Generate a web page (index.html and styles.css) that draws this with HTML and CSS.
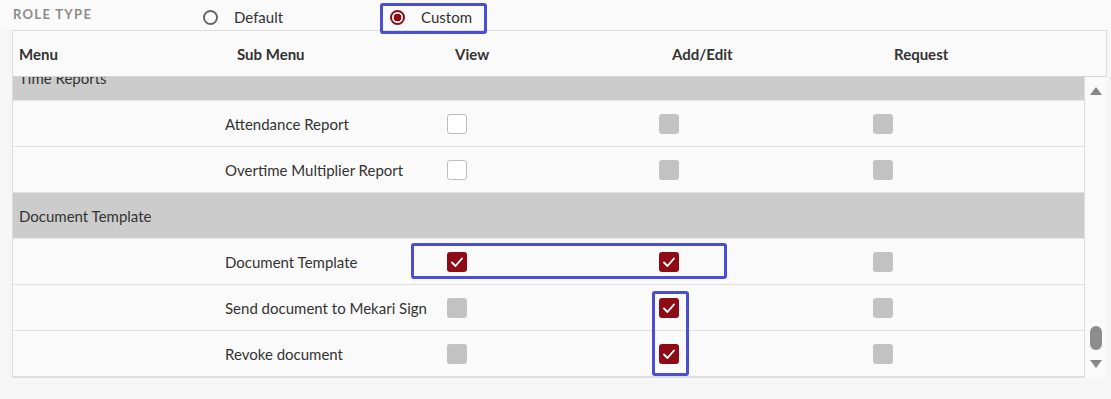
FILE: index.html
```html
<!DOCTYPE html>
<html>

<head>
    <meta charset="UTF-8">
    <title>Role Access</title>
    <link rel="stylesheet" href="styles.css">
</head>

<body>
    <div class="page">
        <div class="role-bar">
            <span class="role-label">ROLE TYPE</span>
            <label class="radio"><span class="dot"></span>Default</label>
            <label class="radio checked"><span class="dot"></span>Custom</label>
        </div>

        <div class="access">
            <div class="thead">
                <div class="cell">Menu</div>
                <div class="cell">Sub Menu</div>
                <div class="cell">View</div>
                <div class="cell">Add/Edit</div>
                <div class="cell">Request</div>
            </div>

            <div class="scroll-wrap">
                <div class="tbody">
                    <div class="rows">
                        <div class="row group"><div class="cell">Time Reports</div></div>

                        <div class="row">
                            <div class="cell"></div>
                            <div class="cell">Attendance Report</div>
                            <div class="cell"><span class="cb"></span></div>
                            <div class="cell"><span class="cb off"></span></div>
                            <div class="cell"><span class="cb off"></span></div>
                        </div>
                        <div class="row">
                            <div class="cell"></div>
                            <div class="cell">Overtime Multiplier Report</div>
                            <div class="cell"><span class="cb"></span></div>
                            <div class="cell"><span class="cb off"></span></div>
                            <div class="cell"><span class="cb off"></span></div>
                        </div>

                        <div class="row group"><div class="cell">Document Template</div></div>

                        <div class="row">
                            <div class="cell"></div>
                            <div class="cell">Document Template</div>
                            <div class="cell"><span class="cb on"><svg viewBox="0 0 20 20"><polyline points="5,10.5 8.5,14 15,6.5"/></svg></span></div>
                            <div class="cell"><span class="cb on"><svg viewBox="0 0 20 20"><polyline points="5,10.5 8.5,14 15,6.5"/></svg></span></div>
                            <div class="cell"><span class="cb off"></span></div>
                        </div>
                        <div class="row">
                            <div class="cell"></div>
                            <div class="cell">Send document to Mekari Sign</div>
                            <div class="cell"><span class="cb off"></span></div>
                            <div class="cell"><span class="cb on"><svg viewBox="0 0 20 20"><polyline points="5,10.5 8.5,14 15,6.5"/></svg></span></div>
                            <div class="cell"><span class="cb off"></span></div>
                        </div>
                        <div class="row">
                            <div class="cell"></div>
                            <div class="cell">Revoke document</div>
                            <div class="cell"><span class="cb off"></span></div>
                            <div class="cell"><span class="cb on"><svg viewBox="0 0 20 20"><polyline points="5,10.5 8.5,14 15,6.5"/></svg></span></div>
                            <div class="cell"><span class="cb off"></span></div>
                        </div>
                    </div>
                </div>

                <div class="scrollbar">
                    <span class="arrow up"></span>
                    <span class="thumb"></span>
                    <span class="arrow down"></span>
                </div>
            </div>
        </div>

        <!-- review highlights -->
        <div class="mark mark-role"></div>
        <div class="mark mark-row"></div>
        <div class="mark mark-col"></div>
    </div>
</body>

</html>
```

FILE: styles.css
```css
body {
    margin: 0;
    background: #f6f6f6;
    font-family: Lato, "Open Sans", sans-serif;
    font-size: 15px;
    color: #333;
}

.page {
    position: relative;
    width: 1111px;
    height: 399px;
}

.role-bar {
    height: 30px;
    display: flex;
    align-items: center;
    padding-left: 13px;
    background: #fafafa;
}

.role-label {
    width: 190px;
    font-size: 13px;
    font-weight: bold;
    letter-spacing: 1.3px;
    color: #8c8c8c;
    padding-bottom: 3px;
}

.radio {
    display: flex;
    align-items: center;
    gap: 16px;
    margin-top: 4px;
}

.radio + .radio {
    margin-left: 107px;
}

.dot {
    box-sizing: border-box;
    width: 15px;
    height: 15px;
    border: 2px solid #666;
    border-radius: 50%;
    background: #fff;
}

.radio.checked .dot {
    border-color: #8e0b15;
    background: radial-gradient(circle, #8e0b15 0 3.6px, #fff 4.2px);
}

.access {
    margin-left: 13px;
    width: 1094px;
}

.thead {
    display: grid;
    grid-template-columns: 218px 218px 217px 222px 1fr;
    height: 45px;
    align-items: center;
    background: #fafafa;
    border: 1px solid #dcdcdc;
    border-bottom: 1px solid #d4d4d4;
    margin-left: -1px;
    font-weight: bold;
}

.cell {
    padding-left: 6px;
}

.scroll-wrap {
    display: flex;
}

.tbody {
    width: 1071px;
    height: 300px;
    overflow: hidden;
    background: #fafafa;
    border-left: 1px solid #dcdcdc;
    border-right: 1px solid #dcdcdc;
    border-bottom: 1px solid #dcdcdc;
    margin-left: -1px;
}

.rows {
    margin-top: -22px;
}

.row {
    display: grid;
    grid-template-columns: 206px 222px 212px 214px 1fr;
    height: 45px;
    align-items: center;
    border-bottom: 1px solid #e0e0e0;
}

.row.group {
    grid-template-columns: 1fr;
    background: #cccccc;
    border-bottom-color: #e8e8e8;
}

.cb {
    display: block;
    box-sizing: border-box;
    width: 20px;
    height: 20px;
    border: 1px solid #bdbdbd;
    border-radius: 3px;
    background: #fff;
}

.cb.off {
    border: none;
    background: #c2c2c2;
}

.cb.on {
    border: none;
    background: #8e0b15;
}

.cb svg {
    display: block;
    width: 20px;
    height: 20px;
}

.cb polyline {
    fill: none;
    stroke: #fff;
    stroke-width: 1.9;
    stroke-linecap: round;
    stroke-linejoin: round;
}

.scrollbar {
    width: 22px;
    height: 301px;
    background: #fafafa;
    display: flex;
    flex-direction: column;
    align-items: center;
}

.arrow {
    width: 0;
    height: 0;
    border-left: 6px solid transparent;
    border-right: 6px solid transparent;
}

.arrow.up {
    margin-top: 10px;
    border-bottom: 8px solid #888;
}

.thumb {
    margin-top: auto;
    width: 12px;
    height: 24px;
    border-radius: 6px;
    background: #8c8c8c;
}

.arrow.down {
    margin-top: 10px;
    margin-bottom: 10px;
    border-top: 8px solid #888;
}

.mark {
    position: absolute;
    box-sizing: border-box;
    border: 3px solid #4a4fd2;
    border-radius: 3px;
}

.mark-role {
    left: 380px;
    top: 3px;
    width: 107px;
    height: 31px;
}

.mark-row {
    left: 411px;
    top: 243px;
    width: 316px;
    height: 36px;
}

.mark-col {
    left: 652px;
    top: 291px;
    width: 37px;
    height: 85px;
}
```
